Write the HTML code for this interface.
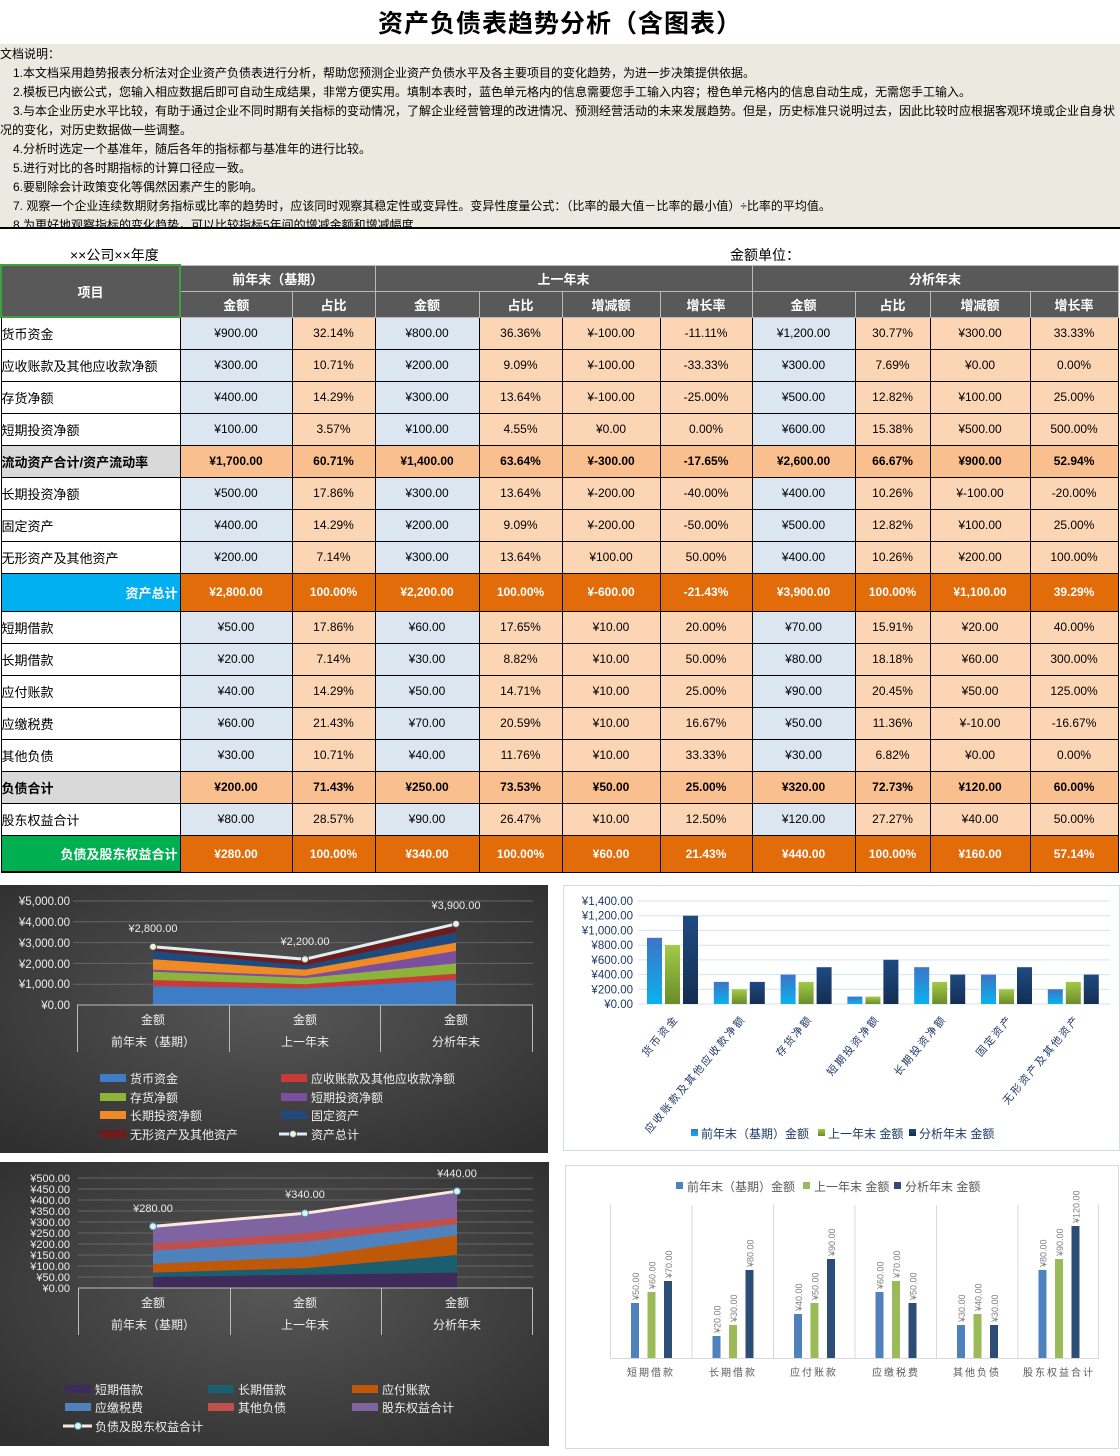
<!DOCTYPE html>
<html><head><meta charset="utf-8">
<style>
*{margin:0;padding:0;box-sizing:border-box}
body{width:1120px;height:1456px;background:#fff;position:relative;overflow:hidden;font-family:"Liberation Sans","Noto Sans CJK SC",sans-serif;color:#000}
.title{position:absolute;left:0;top:4px;width:1120px;text-align:center;font-size:25px;font-weight:bold;letter-spacing:1px}
.notes{position:absolute;left:0;top:44px;width:1120px;height:185px;background:#ECEAE0;overflow:hidden;font-size:12px;line-height:19px;padding-top:1px;border-bottom:2px solid #000}
.notes div{white-space:nowrap}
.notes .i{padding-left:13px}
.sub{position:absolute;top:245px;font-size:14px}
table{position:absolute;left:0;top:264px;border-collapse:collapse;table-layout:fixed;width:1117px}
td{border:1px solid #000;text-align:center;font-size:12px;white-space:nowrap;overflow:hidden;padding:0}
.h td{background:#595959;color:#fff;font-weight:bold;font-size:13px;border-color:#bbb}
td.l{text-align:left;font-size:13px;background:#fff}
.b{background:#DCE6F1}.p{background:#FCD5B4}
.s td{background:#FABF8F;font-weight:bold}
.s td.l{background:#D9D9D9}
.t td{background:#E26B0A;color:#fff;font-weight:bold}
.r td{height:32px}
svg{position:absolute}
svg text{font-family:"Liberation Sans","Noto Sans CJK SC",sans-serif}
</style></head><body>
<div class="title">资产负债表趋势分析（含图表）</div>
<div class="notes">
<div>文档说明：</div>
<div class="i">1.本文档采用趋势报表分析法对企业资产负债表进行分析，帮助您预测企业资产负债水平及各主要项目的变化趋势，为进一步决策提供依据。</div>
<div class="i">2.模板已内嵌公式，您输入相应数据后即可自动生成结果，非常方便实用。填制本表时，蓝色单元格内的信息需要您手工输入内容；橙色单元格内的信息自动生成，无需您手工输入。</div>
<div class="i">3.与本企业历史水平比较，有助于通过企业不同时期有关指标的变动情况，了解企业经营管理的改进情况、预测经营活动的未来发展趋势。但是，历史标准只说明过去，因此比较时应根据客观环境或企业自身状</div>
<div>况的变化，对历史数据做一些调整。</div>
<div class="i">4.分析时选定一个基准年，随后各年的指标都与基准年的进行比较。</div>
<div class="i">5.进行对比的各时期指标的计算口径应一致。</div>
<div class="i">6.要剔除会计政策变化等偶然因素产生的影响。</div>
<div class="i">7. 观察一个企业连续数期财务指标或比率的趋势时，应该同时观察其稳定性或变异性。变异性度量公式：（比率的最大值－比率的最小值）÷比率的平均值。</div>
<div class="i">8.为更好地观察指标的变化趋势，可以比较指标5年间的增减金额和增减幅度</div>
</div>
<div class="sub" style="left:70px">××公司××年度</div>
<div class="sub" style="left:730px">金额单位：</div>
<table>
<colgroup><col style="width:179px"><col style="width:112px"><col style="width:83px"><col style="width:104px"><col style="width:83px"><col style="width:98px"><col style="width:92px"><col style="width:103px"><col style="width:75px"><col style="width:100px"><col style="width:88px"></colgroup>
<tr class="h"><td rowspan="2" style="height:52px;border:2px solid #3EA33E">项目</td><td colspan="2" style="height:26px">前年末（基期）</td><td colspan="4">上一年末</td><td colspan="4">分析年末</td></tr>
<tr class="h"><td style="height:26px">金额</td><td>占比</td><td>金额</td><td>占比</td><td>增减额</td><td>增长率</td><td>金额</td><td>占比</td><td>增减额</td><td>增长率</td></tr>
<tr class="r"><td class="l">货币资金</td><td class="b">¥900.00</td><td class="p">32.14%</td><td class="b">¥800.00</td><td class="p">36.36%</td><td class="p">¥-100.00</td><td class="p">-11.11%</td><td class="b">¥1,200.00</td><td class="p">30.77%</td><td class="p">¥300.00</td><td class="p">33.33%</td></tr>
<tr class="r"><td class="l">应收账款及其他应收款净额</td><td class="b">¥300.00</td><td class="p">10.71%</td><td class="b">¥200.00</td><td class="p">9.09%</td><td class="p">¥-100.00</td><td class="p">-33.33%</td><td class="b">¥300.00</td><td class="p">7.69%</td><td class="p">¥0.00</td><td class="p">0.00%</td></tr>
<tr class="r"><td class="l">存货净额</td><td class="b">¥400.00</td><td class="p">14.29%</td><td class="b">¥300.00</td><td class="p">13.64%</td><td class="p">¥-100.00</td><td class="p">-25.00%</td><td class="b">¥500.00</td><td class="p">12.82%</td><td class="p">¥100.00</td><td class="p">25.00%</td></tr>
<tr class="r"><td class="l">短期投资净额</td><td class="b">¥100.00</td><td class="p">3.57%</td><td class="b">¥100.00</td><td class="p">4.55%</td><td class="p">¥0.00</td><td class="p">0.00%</td><td class="b">¥600.00</td><td class="p">15.38%</td><td class="p">¥500.00</td><td class="p">500.00%</td></tr>
<tr class="r s"><td class="l">流动资产合计/资产流动率</td><td>¥1,700.00</td><td>60.71%</td><td>¥1,400.00</td><td>63.64%</td><td>¥-300.00</td><td>-17.65%</td><td>¥2,600.00</td><td>66.67%</td><td>¥900.00</td><td>52.94%</td></tr>
<tr class="r"><td class="l">长期投资净额</td><td class="b">¥500.00</td><td class="p">17.86%</td><td class="b">¥300.00</td><td class="p">13.64%</td><td class="p">¥-200.00</td><td class="p">-40.00%</td><td class="b">¥400.00</td><td class="p">10.26%</td><td class="p">¥-100.00</td><td class="p">-20.00%</td></tr>
<tr class="r"><td class="l">固定资产</td><td class="b">¥400.00</td><td class="p">14.29%</td><td class="b">¥200.00</td><td class="p">9.09%</td><td class="p">¥-200.00</td><td class="p">-50.00%</td><td class="b">¥500.00</td><td class="p">12.82%</td><td class="p">¥100.00</td><td class="p">25.00%</td></tr>
<tr class="r"><td class="l">无形资产及其他资产</td><td class="b">¥200.00</td><td class="p">7.14%</td><td class="b">¥300.00</td><td class="p">13.64%</td><td class="p">¥100.00</td><td class="p">50.00%</td><td class="b">¥400.00</td><td class="p">10.26%</td><td class="p">¥200.00</td><td class="p">100.00%</td></tr>
<tr class="t"><td class="l" style="height:38px;background:#00B0F0;text-align:right;padding-right:2px;font-weight:bold;color:#fff">资产总计</td><td>¥2,800.00</td><td>100.00%</td><td>¥2,200.00</td><td>100.00%</td><td>¥-600.00</td><td>-21.43%</td><td>¥3,900.00</td><td>100.00%</td><td>¥1,100.00</td><td>39.29%</td></tr>
<tr class="r"><td class="l">短期借款</td><td class="b">¥50.00</td><td class="p">17.86%</td><td class="b">¥60.00</td><td class="p">17.65%</td><td class="p">¥10.00</td><td class="p">20.00%</td><td class="b">¥70.00</td><td class="p">15.91%</td><td class="p">¥20.00</td><td class="p">40.00%</td></tr>
<tr class="r"><td class="l">长期借款</td><td class="b">¥20.00</td><td class="p">7.14%</td><td class="b">¥30.00</td><td class="p">8.82%</td><td class="p">¥10.00</td><td class="p">50.00%</td><td class="b">¥80.00</td><td class="p">18.18%</td><td class="p">¥60.00</td><td class="p">300.00%</td></tr>
<tr class="r"><td class="l">应付账款</td><td class="b">¥40.00</td><td class="p">14.29%</td><td class="b">¥50.00</td><td class="p">14.71%</td><td class="p">¥10.00</td><td class="p">25.00%</td><td class="b">¥90.00</td><td class="p">20.45%</td><td class="p">¥50.00</td><td class="p">125.00%</td></tr>
<tr class="r"><td class="l">应缴税费</td><td class="b">¥60.00</td><td class="p">21.43%</td><td class="b">¥70.00</td><td class="p">20.59%</td><td class="p">¥10.00</td><td class="p">16.67%</td><td class="b">¥50.00</td><td class="p">11.36%</td><td class="p">¥-10.00</td><td class="p">-16.67%</td></tr>
<tr class="r"><td class="l">其他负债</td><td class="b">¥30.00</td><td class="p">10.71%</td><td class="b">¥40.00</td><td class="p">11.76%</td><td class="p">¥10.00</td><td class="p">33.33%</td><td class="b">¥30.00</td><td class="p">6.82%</td><td class="p">¥0.00</td><td class="p">0.00%</td></tr>
<tr class="r s"><td class="l">负债合计</td><td>¥200.00</td><td>71.43%</td><td>¥250.00</td><td>73.53%</td><td>¥50.00</td><td>25.00%</td><td>¥320.00</td><td>72.73%</td><td>¥120.00</td><td>60.00%</td></tr>
<tr class="r"><td class="l">股东权益合计</td><td class="b">¥80.00</td><td class="p">28.57%</td><td class="b">¥90.00</td><td class="p">26.47%</td><td class="p">¥10.00</td><td class="p">12.50%</td><td class="b">¥120.00</td><td class="p">27.27%</td><td class="p">¥40.00</td><td class="p">50.00%</td></tr>
<tr class="t"><td class="l" style="height:37px;background:#00B050;text-align:right;padding-right:2px;font-weight:bold;color:#fff;border-bottom:2px solid #000">负债及股东权益合计</td><td>¥280.00</td><td>100.00%</td><td>¥340.00</td><td>100.00%</td><td>¥60.00</td><td>21.43%</td><td>¥440.00</td><td>100.00%</td><td>¥160.00</td><td>57.14%</td></tr>
</table>

<!-- Chart 1 -->
<svg style="left:0;top:885px" width="548" height="268" viewBox="0 0 548 268">
<defs><radialGradient id="dk" cx="50%" cy="45%" r="70%"><stop offset="0" stop-color="#575757"/><stop offset="1" stop-color="#2f2f2f"/></radialGradient></defs>
<rect width="548" height="268" fill="url(#dk)"/>
<g stroke="#666" stroke-width="1"><line x1="73" x2="533" y1="16" y2="16"/><line x1="73" x2="533" y1="36.8" y2="36.8"/><line x1="73" x2="533" y1="57.6" y2="57.6"/><line x1="73" x2="533" y1="78.4" y2="78.4"/><line x1="73" x2="533" y1="99.2" y2="99.2"/></g>
<g font-size="11.5" fill="#eee" text-anchor="end"><text x="70" y="20">¥5,000.00</text><text x="70" y="41">¥4,000.00</text><text x="70" y="62">¥3,000.00</text><text x="70" y="83">¥2,000.00</text><text x="70" y="103">¥1,000.00</text><text x="70" y="124">¥0.00</text></g>
<polygon points="153,120 153,61.8 305,74.2 456,38.9 456,120" fill="#6E1D1D"/>
<polygon points="153,120 153,65.9 305,80.5 456,47.2 456,120" fill="#1F4A7F"/>
<polygon points="153,120 153,74.2 305,84.6 456,57.6 456,120" fill="#F08A24"/>
<polygon points="153,120 153,84.6 305,90.9 456,65.9 456,120" fill="#7B4FA0"/>
<polygon points="153,120 153,86.7 305,93 456,78.4 456,120" fill="#8DB33B"/>
<polygon points="153,120 153,95 305,99.2 456,88.8 456,120" fill="#CB3A3A"/>
<polygon points="153,120 153,101.3 305,103.4 456,95 456,120" fill="#3E7CC6"/>
<polyline points="153,61.8 305,74.2 456,38.9" fill="none" stroke="#DDEEF4" stroke-width="3"/>
<g fill="#F0F2D8" stroke="#556" stroke-width="1"><circle cx="153" cy="61.8" r="3.5"/><circle cx="305" cy="74.2" r="3.5"/><circle cx="456" cy="38.9" r="3.5"/></g>
<g font-size="11" fill="#eee" text-anchor="middle"><text x="153" y="47">¥2,800.00</text><text x="305" y="60">¥2,200.00</text><text x="456" y="24">¥3,900.00</text></g>
<g stroke="#bbb" stroke-width="1"><line x1="77" x2="533" y1="120" y2="120"/><line x1="77.5" x2="77.5" y1="120" y2="167"/><line x1="229.5" x2="229.5" y1="120" y2="167"/><line x1="380.5" x2="380.5" y1="120" y2="167"/><line x1="532.5" x2="532.5" y1="120" y2="167"/></g>
<g font-size="12" fill="#eee" text-anchor="middle"><text x="153" y="139">金额</text><text x="305" y="139">金额</text><text x="456" y="139">金额</text><text x="153" y="161">前年末（基期）</text><text x="305" y="161">上一年末</text><text x="456" y="161">分析年末</text></g>
<g font-size="12" fill="#eee">
<rect x="100" y="189" width="26" height="8" fill="#3E7CC6"/><text x="130" y="198">货币资金</text>
<rect x="281" y="189" width="26" height="8" fill="#CB3A3A"/><text x="311" y="198">应收账款及其他应收款净额</text>
<rect x="100" y="208" width="26" height="8" fill="#8DB33B"/><text x="130" y="217">存货净额</text>
<rect x="281" y="208" width="26" height="8" fill="#7B4FA0"/><text x="311" y="217">短期投资净额</text>
<rect x="100" y="226" width="26" height="8" fill="#F08A24"/><text x="130" y="235">长期投资净额</text>
<rect x="281" y="226" width="26" height="8" fill="#1F4A7F"/><text x="311" y="235">固定资产</text>
<rect x="100" y="245" width="26" height="8" fill="#6E1D1D"/><text x="130" y="254">无形资产及其他资产</text>
<line x1="279" x2="307" y1="249" y2="249" stroke="#DDEEF4" stroke-width="3"/><circle cx="293" cy="249" r="3.5" fill="#F0F2D8" stroke="#556"/><text x="311" y="254">资产总计</text>
</g>
</svg>

<!-- Chart 2 -->
<svg style="left:563px;top:885px" width="557" height="266" viewBox="0 0 557 266">
<defs>
<linearGradient id="g1" x1="0" y1="0" x2="0" y2="1"><stop offset="0" stop-color="#3D74C6"/><stop offset="1" stop-color="#0AB2EF"/></linearGradient>
<linearGradient id="g2" x1="0" y1="0" x2="0" y2="1"><stop offset="0" stop-color="#A2CA45"/><stop offset="1" stop-color="#6B8C2B"/></linearGradient>
<linearGradient id="g3" x1="0" y1="0" x2="0" y2="1"><stop offset="0" stop-color="#1F4A82"/><stop offset="1" stop-color="#142E52"/></linearGradient>
</defs>
<rect x="0.5" y="0.5" width="556" height="265" fill="#fff" stroke="#D6DCE4"/>
<g stroke="#D5E2F0" stroke-width="1"><line x1="75" x2="547" y1="16" y2="16"/><line x1="75" x2="547" y1="30.7" y2="30.7"/><line x1="75" x2="547" y1="45.4" y2="45.4"/><line x1="75" x2="547" y1="60.2" y2="60.2"/><line x1="75" x2="547" y1="74.9" y2="74.9"/><line x1="75" x2="547" y1="89.6" y2="89.6"/><line x1="75" x2="547" y1="104.3" y2="104.3"/><line x1="75" x2="547" y1="119" y2="119"/></g>
<g font-size="11.5" fill="#1F3864" text-anchor="end"><text x="70" y="20">¥1,400.00</text><text x="70" y="34.7">¥1,200.00</text><text x="70" y="49.4">¥1,000.00</text><text x="70" y="64.2">¥800.00</text><text x="70" y="78.9">¥600.00</text><text x="70" y="93.6">¥400.00</text><text x="70" y="108.3">¥200.00</text><text x="70" y="123">¥0.00</text></g>
<g fill="url(#g1)"><rect x="84" y="52.8" width="15" height="66.2"/><rect x="150.8" y="96.9" width="15" height="22.1"/><rect x="217.6" y="89.6" width="15" height="29.4"/><rect x="284.4" y="111.6" width="15" height="7.4"/><rect x="351.2" y="82.2" width="15" height="36.8"/><rect x="418" y="89.6" width="15" height="29.4"/><rect x="484.8" y="104.3" width="15" height="14.7"/></g>
<g fill="url(#g2)"><rect x="102" y="60.1" width="15" height="58.9"/><rect x="168.8" y="104.3" width="15" height="14.7"/><rect x="235.6" y="96.9" width="15" height="22.1"/><rect x="302.4" y="111.6" width="15" height="7.4"/><rect x="369.2" y="96.9" width="15" height="22.1"/><rect x="436" y="104.3" width="15" height="14.7"/><rect x="502.8" y="96.9" width="15" height="22.1"/></g>
<g fill="url(#g3)"><rect x="120" y="30.7" width="15" height="88.3"/><rect x="186.8" y="96.9" width="15" height="22.1"/><rect x="253.6" y="82.2" width="15" height="36.8"/><rect x="320.4" y="74.8" width="15" height="44.2"/><rect x="387.2" y="89.6" width="15" height="29.4"/><rect x="454" y="82.2" width="15" height="36.8"/><rect x="520.8" y="89.6" width="15" height="29.4"/></g>
<g font-size="10.5" fill="#1F3864" text-anchor="end" letter-spacing="2">
<text transform="translate(116,134) rotate(-50)">货币资金</text>
<text transform="translate(183,134) rotate(-50)">应收账款及其他应收款净额</text>
<text transform="translate(250,134) rotate(-50)">存货净额</text>
<text transform="translate(317,134) rotate(-50)">短期投资净额</text>
<text transform="translate(384,134) rotate(-50)">长期投资净额</text>
<text transform="translate(450,134) rotate(-50)">固定资产</text>
<text transform="translate(517,134) rotate(-50)">无形资产及其他资产</text>
</g>
<g font-size="12" fill="#1F3864">
<rect x="128" y="244" width="7" height="7" fill="url(#g1)"/><text x="138" y="253">前年末（基期）金额</text>
<rect x="255" y="244" width="7" height="7" fill="url(#g2)"/><text x="265" y="253">上一年末 金额</text>
<rect x="346" y="244" width="7" height="7" fill="url(#g3)"/><text x="356" y="253">分析年末 金额</text>
</g>
</svg>

<!-- Chart 3 -->
<svg style="left:0;top:1162px" width="549" height="284" viewBox="0 0 549 284">
<rect width="549" height="284" fill="url(#dk)"/>
<g stroke="#666"><line x1="78" x2="533" y1="16" y2="16"/><line x1="78" x2="533" y1="27" y2="27"/><line x1="78" x2="533" y1="38" y2="38"/><line x1="78" x2="533" y1="49" y2="49"/><line x1="78" x2="533" y1="60" y2="60"/><line x1="78" x2="533" y1="71" y2="71"/><line x1="78" x2="533" y1="82" y2="82"/><line x1="78" x2="533" y1="93" y2="93"/><line x1="78" x2="533" y1="104" y2="104"/><line x1="78" x2="533" y1="115" y2="115"/></g>
<g font-size="11" fill="#eee" text-anchor="end"><text x="70" y="20">¥500.00</text><text x="70" y="31">¥450.00</text><text x="70" y="42">¥400.00</text><text x="70" y="53">¥350.00</text><text x="70" y="64">¥300.00</text><text x="70" y="75">¥250.00</text><text x="70" y="86">¥200.00</text><text x="70" y="97">¥150.00</text><text x="70" y="108">¥100.00</text><text x="70" y="119">¥50.00</text><text x="70" y="130">¥0.00</text></g>
<polygon points="153,126 153,64.4 305,51.2 457,29.2 457,126" fill="#8064A2"/>
<polygon points="153,126 153,82 305,71 457,55.6 457,126" fill="#C0504D"/>
<polygon points="153,126 153,88.6 305,79.8 457,62.2 457,126" fill="#4F81BD"/>
<polygon points="153,126 153,101.8 305,95.2 457,73.2 457,126" fill="#C0580A"/>
<polygon points="153,126 153,110.6 305,106.2 457,93 457,126" fill="#1A5E70"/>
<polygon points="153,126 153,115 305,112.8 457,110.6 457,126" fill="#3F2A5C"/>
<polyline points="153,64.4 305,51.2 457,29.2" fill="none" stroke="#FCE9DD" stroke-width="3"/>
<g fill="#DDF2F6" stroke="#4a8fa0"><circle cx="153" cy="64.4" r="3.5"/><circle cx="305" cy="51.2" r="3.5"/><circle cx="457" cy="29.2" r="3.5"/></g>
<g font-size="11" fill="#eee" text-anchor="middle"><text x="153" y="50">¥280.00</text><text x="305" y="36">¥340.00</text><text x="457" y="15">¥440.00</text></g>
<g stroke="#bbb"><line x1="78" x2="533" y1="126" y2="126"/><line x1="78.5" x2="78.5" y1="126" y2="173"/><line x1="230.5" x2="230.5" y1="126" y2="173"/><line x1="381.5" x2="381.5" y1="126" y2="173"/><line x1="532.5" x2="532.5" y1="126" y2="173"/></g>
<g font-size="12" fill="#eee" text-anchor="middle"><text x="153" y="145">金额</text><text x="305" y="145">金额</text><text x="457" y="145">金额</text><text x="153" y="167">前年末（基期）</text><text x="305" y="167">上一年末</text><text x="457" y="167">分析年末</text></g>
<g font-size="12" fill="#eee">
<rect x="65" y="223" width="26" height="8" fill="#3F2A5C"/><text x="95" y="232">短期借款</text>
<rect x="208" y="223" width="26" height="8" fill="#1A5E70"/><text x="238" y="232">长期借款</text>
<rect x="352" y="223" width="26" height="8" fill="#C0580A"/><text x="382" y="232">应付账款</text>
<rect x="65" y="241" width="26" height="8" fill="#4F81BD"/><text x="95" y="250">应缴税费</text>
<rect x="208" y="241" width="26" height="8" fill="#C0504D"/><text x="238" y="250">其他负债</text>
<rect x="352" y="241" width="26" height="8" fill="#8064A2"/><text x="382" y="250">股东权益合计</text>
<line x1="63" x2="92" y1="264" y2="264" stroke="#FCE9DD" stroke-width="3"/><circle cx="78" cy="264" r="3.5" fill="#DDF2F6" stroke="#4a8fa0"/><text x="95" y="269">负债及股东权益合计</text>
</g>
</svg>

<!-- Chart 4 -->
<svg style="left:565px;top:1165px" width="554" height="284" viewBox="0 0 554 284">
<rect x="0.5" y="0.5" width="553" height="283" fill="#fff" stroke="#D9D9D9"/>
<g font-size="12" fill="#595959">
<rect x="111" y="17" width="7" height="7" fill="#4F81BD"/><text x="122" y="26">前年末（基期）金额</text>
<rect x="238" y="17" width="7" height="7" fill="#9BBB59"/><text x="249" y="26">上一年末 金额</text>
<rect x="329" y="17" width="7" height="7" fill="#2C4D75"/><text x="340" y="26">分析年末 金额</text>
</g>
<g stroke="#D9D9D9"><line x1="45.5" x2="45.5" y1="40" y2="193"/><line x1="127" x2="127" y1="40" y2="193"/><line x1="208.5" x2="208.5" y1="40" y2="193"/><line x1="290" x2="290" y1="40" y2="193"/><line x1="371.5" x2="371.5" y1="40" y2="193"/><line x1="453" x2="453" y1="40" y2="193"/><line x1="533.5" x2="533.5" y1="40" y2="193"/><line x1="45" x2="534" y1="193.5" y2="193.5"/></g>
<g fill="#4F81BD"><rect x="66" y="138" width="8" height="55"/><rect x="147.5" y="171" width="8" height="22"/><rect x="229" y="149" width="8" height="44"/><rect x="310.5" y="127" width="8" height="66"/><rect x="392" y="160" width="8" height="33"/><rect x="473.5" y="105" width="8" height="88"/></g>
<g fill="#9BBB59"><rect x="82.5" y="127" width="8" height="66"/><rect x="164" y="160" width="8" height="33"/><rect x="245.5" y="138" width="8" height="55"/><rect x="327" y="116" width="8" height="77"/><rect x="408.5" y="149" width="8" height="44"/><rect x="490" y="94" width="8" height="99"/></g>
<g fill="#2C4D75"><rect x="99" y="116" width="8" height="77"/><rect x="180.5" y="105" width="8" height="88"/><rect x="262" y="94" width="8" height="99"/><rect x="343.5" y="138" width="8" height="55"/><rect x="425" y="160" width="8" height="33"/><rect x="506.5" y="61" width="8" height="132"/></g>
<g font-size="9" fill="#7F7F7F">
<text transform="translate(74,135) rotate(-90)">¥50.00</text><text transform="translate(90.5,124) rotate(-90)">¥60.00</text><text transform="translate(107,113) rotate(-90)">¥70.00</text>
<text transform="translate(155.5,168) rotate(-90)">¥20.00</text><text transform="translate(172,157) rotate(-90)">¥30.00</text><text transform="translate(188.5,102) rotate(-90)">¥80.00</text>
<text transform="translate(237,146) rotate(-90)">¥40.00</text><text transform="translate(253.5,135) rotate(-90)">¥50.00</text><text transform="translate(270,91) rotate(-90)">¥90.00</text>
<text transform="translate(318.5,124) rotate(-90)">¥60.00</text><text transform="translate(335,113) rotate(-90)">¥70.00</text><text transform="translate(351.5,135) rotate(-90)">¥50.00</text>
<text transform="translate(400,157) rotate(-90)">¥30.00</text><text transform="translate(416.5,146) rotate(-90)">¥40.00</text><text transform="translate(433,157) rotate(-90)">¥30.00</text>
<text transform="translate(481.5,102) rotate(-90)">¥80.00</text><text transform="translate(498,91) rotate(-90)">¥90.00</text><text transform="translate(514.5,58) rotate(-90)">¥120.00</text>
</g>
<g font-size="10" fill="#595959" text-anchor="middle" letter-spacing="2"><text x="86" y="211">短期借款</text><text x="168" y="211">长期借款</text><text x="249" y="211">应付账款</text><text x="331" y="211">应缴税费</text><text x="412" y="211">其他负债</text><text x="494" y="211">股东权益合计</text></g>
</svg>
</body></html>
